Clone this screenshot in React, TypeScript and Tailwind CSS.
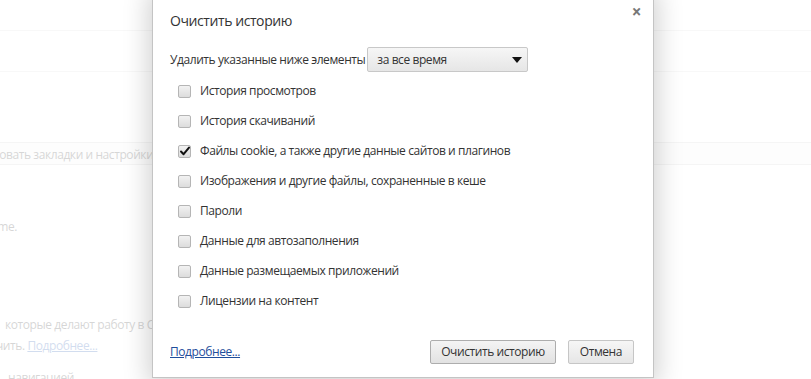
import React from 'react';

const items = [
  { label: 'История просмотров', checked: false },
  { label: 'История скачиваний', checked: false },
  { label: 'Файлы cookie, а также другие данные сайтов и плагинов', checked: true },
  { label: 'Изображения и другие файлы, сохраненные в кеше', checked: false },
  { label: 'Пароли', checked: false },
  { label: 'Данные для автозаполнения', checked: false },
  { label: 'Данные размещаемых приложений', checked: false },
  { label: 'Лицензии на контент', checked: false },
];

function Checkbox({ checked }: { checked: boolean }) {
  return (
    <span className="relative flex h-[13px] w-[13px] shrink-0 items-center justify-center rounded-[2px] border border-[#b5b5b5] bg-gradient-to-b from-[#f2f2f2] to-[#dcdcdc]">
      {checked && (
        <svg width="12" height="12" viewBox="0 0 12 12" className="absolute -top-[1px] left-[0px]">
          <path d="M2 6.5 L4.6 9.2 L10 2.6" fill="none" stroke="#111" strokeWidth="2" strokeLinecap="round" strokeLinejoin="round" />
        </svg>
      )}
    </span>
  );
}

export default function App() {
  return (
    <div
      className="relative h-[379px] w-[811px] overflow-hidden bg-white text-[#333] tracking-[-0.42px]"
      style={{ fontFamily: '"Open Sans", "Noto Sans", sans-serif' }}
    >
      {/* page behind the dialog */}
      <div className="flex h-full flex-col text-[12px] text-[#777] [&>*]:shrink-0">
        <div className="h-[31px] border-b border-[#e6e6e6]" />
        <div className="h-[41px] border-b border-[#e6e6e6]" />
        <div className="h-[70px]" />
        <div className="flex h-[23px] items-center overflow-hidden border-y border-[#dcdcdc] bg-[#f8f8f8] pt-[3px]">
          <span className="-ml-[58px] whitespace-nowrap">Импортировать закладки и настройки</span>
        </div>
        <div className="h-[54px]" />
        <div className="overflow-hidden leading-4">
          <span className="-ml-[28px] whitespace-nowrap">Chrome.</span>
        </div>
        <div className="h-[82px]" />
        <div className="pl-[5px] leading-4 whitespace-nowrap">которые делают работу в Chrome</div>
        <div className="mt-[5px] overflow-hidden leading-4 whitespace-nowrap">
          <span className="-ml-[4px]">чить. </span>
          <span className="text-[#6a8cc8] underline">Подробнее...</span>
        </div>
        <div className="mt-[16px] pl-[8px] leading-4 whitespace-nowrap">навигацией</div>
      </div>

      {/* overlay */}
      <div className="absolute inset-0 bg-white/70" />

      {/* dialog */}
      <div className="absolute -top-[10px] left-[152px] flex h-[388px] w-[502px] flex-col border border-[#c4c4c4] bg-white pl-[17px] pr-[19px] pt-[20px] shadow-[0_4px_24px_4px_rgba(0,0,0,0.18)]">
        <span className="absolute right-[12px] top-[11px] text-[17px] font-bold leading-5 text-[#777]">×</span>
        <h1 className="text-[14px] leading-5 text-[#333]">Очистить историю</h1>

        <div className="mt-[16px] flex items-center gap-[2px] text-[12px]">
          <span className="whitespace-nowrap">Удалить указанные ниже элементы</span>
          <div className="flex h-[25px] w-[161px] items-center justify-between rounded-[2px] border border-[#c8c8c8] bg-gradient-to-b from-[#f6f6f6] to-[#e6e6e6] pl-[9px] pr-[5px]">
            <span>за все время</span>
            <svg width="10" height="6" viewBox="0 0 10 6">
              <path d="M0 0 H10 L5 6 Z" fill="#111" />
            </svg>
          </div>
        </div>

        <div className="mt-[4px] flex flex-col text-[12px]">
          {items.map((it) => (
            <label key={it.label} className="flex h-[30px] items-center gap-[9px] pl-[8px]">
              <Checkbox checked={it.checked} />
              <span className="whitespace-nowrap">{it.label}</span>
            </label>
          ))}
        </div>

        <div className="mt-auto mb-[13px] flex items-center justify-between text-[12px]">
          <a className="text-[#1f4e9c] underline">Подробнее...</a>
          <div className="flex gap-[12px]">
            <button className="h-[24px] rounded-[2px] border border-[#adadad] bg-gradient-to-b from-[#f4f4f4] to-[#e2e2e2] px-[10px] text-[#333]">
              Очистить историю
            </button>
            <button className="h-[24px] rounded-[2px] border border-[#c6c6c6] bg-gradient-to-b from-[#f6f6f6] to-[#e6e6e6] px-[11px] text-[#333]">
              Отмена
            </button>
          </div>
        </div>
      </div>
    </div>
  );
}
